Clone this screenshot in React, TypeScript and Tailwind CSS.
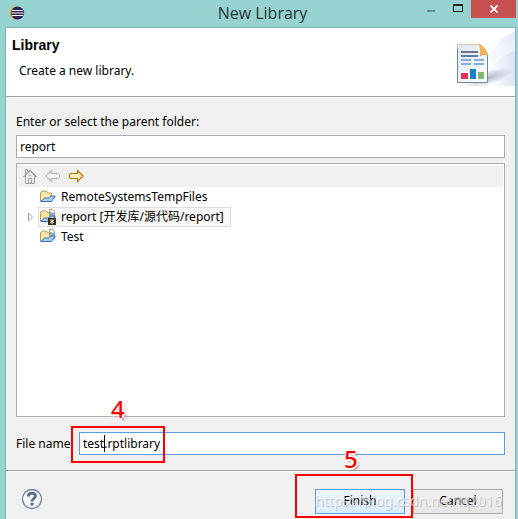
import React from "react";

const EclipseIcon = () => (
  <svg width="16" height="16" viewBox="0 0 16 16" aria-hidden="true">
    <circle cx="7.300" cy="8" r="6.500" fill="#f7941e" />
    <circle cx="8.600" cy="8" r="6.500" fill="#2c2255" />
    <path d="M3 5.500h11M2.400 8h12.400M3 10.500h11" stroke="#fff" strokeWidth="1.200" />
  </svg>
);

const ReportBanner = () => (
  <svg width="75" height="58" viewBox="0 0 75 58" aria-hidden="true">
    <defs>
      <linearGradient id="sweep" x1="0" y1="1" x2="1" y2="0">
        <stop offset="0.3" stopColor="#fff" />
        <stop offset="1" stopColor="#e6ebf8" />
      </linearGradient>
      <linearGradient id="page" x1="0" y1="0" x2="1" y2="1">
        <stop offset="0" stopColor="#dfe7f4" />
        <stop offset="1" stopColor="#fff" />
      </linearGradient>
      <linearGradient id="lower" x1="0" y1="0" x2="1" y2="0">
        <stop offset="0" stopColor="#fff" stopOpacity="0" />
        <stop offset="1" stopColor="#dbe2f5" />
      </linearGradient>
      <radialGradient id="shade">
        <stop offset="0" stopColor="#b5b2c8" />
        <stop offset="1" stopColor="#b5b2c8" stopOpacity="0" />
      </radialGradient>
    </defs>
    <path d="M75 3C60 9 51 22 44 36L30 58H75Z" fill="url(#sweep)" />
    <path d="M75 23C60 28 50 37 40 58H75Z" fill="url(#lower)" />
    <ellipse cx="48" cy="50" rx="26" ry="7" fill="url(#shade)" transform="rotate(-18 48 50)" />
    <path d="M17.500 16.500H39l8.500 11V54.500H17.500Z" fill="url(#page)" />
    <path d="M17.500 54V16.500H39" fill="none" stroke="#d9c8b0" />
    <path d="M17.500 20V54.500H47.500V27" fill="none" stroke="#6b8a99" />
    <path d="M39 16c3 1 8 6 9 12-2-2-5-2-8 0 1-4 1-8-1-12Z" fill="#f3b659" stroke="#d99544" strokeWidth="0.600" />
    <path d="M21 24h17" stroke="#75718c" strokeWidth="2" />
    <path d="M21 28h17" stroke="#5681ae" strokeWidth="2" />
    <path d="M21 32h10M34 32h10M21 36h10M34 36h10" stroke="#83b0d6" strokeWidth="2" />
    <path d="M21 45h7v6h-7z" fill="#e52f55" />
    <path d="M30 41h6v10h-6z" fill="#1683cb" />
    <path d="M38 44h6v7h-6z" fill="#7fb877" />
  </svg>
);

const HomeIcon = () => (
  <svg width="16" height="16" viewBox="0 0 16 16" fill="none" stroke="#a0a0a0" aria-hidden="true">
    <path d="M1.500 9 8 2.500 14.500 9" strokeWidth="1.400" />
    <path d="M3.500 8v7.500h9V8M3.500 6.500v-5h2V4" />
    <path d="M6.500 15v-4.500h3V15M7 7.500h2M8 6.500v2" />
  </svg>
);

const BackIcon = () => (
  <svg width="16" height="16" viewBox="0 0 16 16" aria-hidden="true">
    <path d="M1 8 6.500 2.500v3h7l1 1v3l-1 1h-7v3Z" fill="#f5f5f5" stroke="#b0b0b0" />
  </svg>
);

const ForwardIcon = () => (
  <svg width="16" height="16" viewBox="0 0 16 16" aria-hidden="true">
    <path d="M15 8 9.500 2.500v3h-7l-1 1v3l1 1h7v3Z" fill="#fff0b5" stroke="#b87a14" strokeWidth="1.200" />
  </svg>
);

const FolderIcon = ({ project, shared }: { project?: boolean; shared?: boolean }) => (
  <svg width="16" height="16" viewBox="0 0 16 16" aria-hidden="true">
    <path d="M.500 12V4l1.500-2h4.500L8 4h3.500v4L11 12Z" fill="#fae7a5" stroke="#b69a5c" />
    {project && (
      <>
        <path d="M9.500.500h3l2 2v6h-5z" fill="#fff" stroke="#c49a4e" />
        <path d="M11 3v5M13 4v4" stroke="#2879b8" strokeWidth="1.200" />
      </>
    )}
    <path d="M.800 12.500 4.500 9H8.500l2-2h4.800l-3.800 5.500Z" fill="#a9cdf2" stroke="#3b70b4" />
    {shared && (
      <>
        <path d="M8 9h8v7H8z" fill="#3d2e12" />
        <path d="M12 10v5M10 11l4 3M14 11l-4 3" stroke="#fff" strokeWidth="0.900" />
      </>
    )}
  </svg>
);

const HelpIcon = () => (
  <svg width="22" height="22" viewBox="0 0 22 22" fill="none" aria-hidden="true">
    <circle cx="11" cy="11" r="9.500" fill="#f5f7fa" stroke="#71839d" strokeWidth="1.300" />
    <path d="M7.300 8.500C7.300 4 14.800 4.200 14.500 8c-.2 2.300-3.500 2.700-3.500 5.500" stroke="#566b8c" strokeWidth="2.700" />
    <path d="M9.500 14.800h3v2.700h-3z" fill="#566b8c" />
  </svg>
);

const folders = [
  { name: "RemoteSystemsTempFiles" },
  { name: "report [开发库/源代码/report]", project: true, shared: true, selected: true },
  { name: "Test", project: true },
];

const App = () => {
  return (
    <div className="flex min-h-screen flex-col bg-[#96d3d1] pr-[2px] pl-[5px] font-['Noto_Sans','Noto_Sans_CJK_SC',sans-serif] text-[12px] leading-[20px] text-black">
      <header className="grid h-[27px] grid-cols-[1fr_auto_1fr] items-start pl-[4px]">
        <div className="pt-[5px]">
          <EclipseIcon />
        </div>
        <h1 className="pt-[3px] font-['Open_Sans',sans-serif] text-[16px] leading-[20px] text-[#263636]">
          New Library
        </h1>
        <div className="flex justify-end">
          <button type="button" aria-label="Minimize" className="flex h-[18px] w-[27px] items-center justify-center">
            <span className="mt-[4px] h-[2px] w-[8px] bg-[#6d8f8f]" />
          </button>
          <button type="button" aria-label="Maximize" className="flex h-[16px] w-[27px] items-center justify-center">
            <span className="h-[8px] w-[10px] border border-t-2 border-[#222]" />
          </button>
          <button type="button" aria-label="Close" className="flex h-[18px] w-[45px] items-center justify-center bg-[#c75050]">
            <svg width="8" height="8" viewBox="0 0 8 8" aria-hidden="true">
              <path d="m.500.500 7 7m0-7-7 7" stroke="#fff" strokeWidth="1.800" />
            </svg>
          </button>
        </div>
      </header>

      <main className="flex flex-1 flex-col border-x border-t border-[#7db3b1] bg-[#f0f0f0]">
        <section className="flex h-[69px] justify-between border-b border-[#a0a0a0] bg-white">
          <div className="pt-[7px] pl-[6px]">
            <h2 className="font-['Liberation_Sans',sans-serif] text-[14px] leading-[20px] font-bold">Library</h2>
            <p className="pt-[6px] pl-[7px]">Create a new library.</p>
          </div>
          <ReportBanner />
        </section>

        <form className="flex flex-1 flex-col border-t border-white" onSubmit={(e) => e.preventDefault()}>
          <div className="flex flex-1 flex-col pt-[14px] pr-[10px] pl-[10px]">
            <label htmlFor="parent">Enter or select the parent folder:</label>
            <input
              id="parent"
              type="text"
              defaultValue="report"
              className="mt-[3px] h-[23px] w-full border border-[#abadb3] bg-white px-[3px] outline-none"
            />

            <div className="mt-[5px] min-h-[254px] flex-1 border border-[#abadb3] bg-white p-px">
              <div className="flex h-[22px] items-center gap-[7px] bg-[#f0f0f0] pl-[4px]">
                <button type="button" aria-label="Home">
                  <HomeIcon />
                </button>
                <button type="button" aria-label="Back">
                  <BackIcon />
                </button>
                <button type="button" aria-label="Forward">
                  <ForwardIcon />
                </button>
              </div>
              <ul>
                {folders.map((folder) => (
                  <li key={folder.name} className="flex h-[20px] items-center">
                    <span className="flex w-[20px] justify-center pl-[5px]">
                      {folder.selected && (
                        <svg width="7" height="10" viewBox="0 0 7 10" aria-hidden="true">
                          <path d="M1.500 1v8l4-4Z" fill="#fff" stroke="#a0a0a0" />
                        </svg>
                      )}
                    </span>
                    <span
                      className={
                        folder.selected
                          ? "flex h-[20px] items-center gap-[5px] border border-[#dedede] bg-[#f7f7f7] pr-[6px] pl-px"
                          : "flex h-[20px] items-center gap-[5px] border border-transparent pr-[6px] pl-px"
                      }
                    >
                      <FolderIcon project={folder.project} shared={folder.shared} />
                      {folder.name}
                    </span>
                  </li>
                ))}
              </ul>
            </div>

            <div className="relative my-[15px] flex h-[23px] items-center">
              <label htmlFor="file" className="w-[63px] shrink-0">
                File name:
              </label>
              <input
                id="file"
                type="text"
                defaultValue="test.rptlibrary"
                className="h-[23px] min-w-0 flex-1 border border-[#569de5] bg-white px-[3px] outline-none"
              />
              <span className="absolute top-[3px] left-[88px] h-[17px] w-px bg-black" />
              <span className="pointer-events-none absolute -top-[6px] left-[55px] h-[37px] w-[94px] border-2 border-[#ff0000]" />
              <span className="absolute -top-[38px] left-[95px] text-[24px] leading-[30px] font-medium text-[#ff0000] [text-shadow:-1px_0_#fff,2px_0_#fff,0_2px_#fff,0_-1px_#fff,2px_2px_2px_#888]">
                4
              </span>
            </div>
          </div>

          <footer className="flex h-[49px] items-center justify-between border-t border-[#a0a0a0] pr-[12px] pl-[15px] shadow-[inset_0_1px_#fff]">
            <button type="button" aria-label="Help" className="pt-[8px]">
              <HelpIcon />
            </button>
            <div className="relative mt-[12px] flex gap-[8px]">
              <button type="submit" className="h-[25px] w-[90px] border border-[#569de5] bg-linear-to-b from-[#ecf4fc] to-[#dcecfc]">
                Finish
              </button>
              <button type="button" className="h-[25px] w-[90px] border border-[#acacac] bg-linear-to-b from-[#f0f0f0] to-[#e5e5e5]">
                Cancel
              </button>
              <span className="pointer-events-none absolute -top-[15px] -left-[20px] h-[44px] w-[118px] border-2 border-[#ff0000]" />
              <span className="absolute -top-[45px] left-[29px] text-[24px] leading-[30px] font-medium text-[#ff0000] [text-shadow:-1px_0_#fff,2px_0_#fff,0_2px_#fff,0_-1px_#fff,2px_2px_2px_#888]">
                5
              </span>
              <span className="pointer-events-none absolute top-[2px] left-0 text-[14px] whitespace-nowrap text-white/60 [text-shadow:1px_1px_1px_#00000030]">
                https://blog.csdn.net/lq2016
              </span>
            </div>
          </footer>
        </form>
      </main>
    </div>
  );
};

export default App;
